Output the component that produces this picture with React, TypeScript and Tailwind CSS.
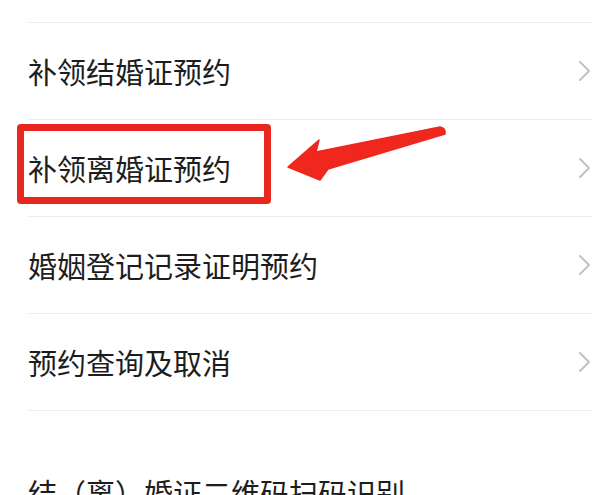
const items = ["补领结婚证预约", "补领离婚证预约", "婚姻登记记录证明预约", "预约查询及取消"];

function Divider() {
  return <div className="ml-[28px] mr-[8px] h-px bg-[#ececec]" />;
}

function Chevron() {
  return (
    <svg width="13" height="22" viewBox="0 0 13 22" fill="none" className="shrink-0">
      <polyline points="2,2 11,11 2,20" stroke="#c2c2c2" strokeWidth="2" strokeLinecap="round" strokeLinejoin="round" />
    </svg>
  );
}

function Row({ label, highlighted }: { label: string; highlighted?: boolean }) {
  return (
    <div className="relative flex h-[96px] items-center justify-between pl-[28px] pr-[9px]">
      <span className="text-[29px] leading-none">{label}</span>
      <Chevron />
      {highlighted && (
        <>
          <div className="absolute left-[17px] top-[4px] h-[80px] w-[254px] rounded-[4px] border-[7px] border-[#e8281f]" />
          <svg className="absolute left-0 top-0" width="600" height="96" viewBox="0 0 600 96">
            <path
              d="M288 47 L319 20 L316 32 L440 7 Q446 8 445 14 L328 49 L320 60 Z"
              fill="#ef271d"
              stroke="#ef271d"
              strokeWidth="1.5"
              strokeLinejoin="round"
            />
          </svg>
        </>
      )}
    </div>
  );
}

export default function App() {
  return (
    <div className="h-[495px] w-[600px] overflow-hidden bg-white font-['Noto_Sans_CJK_SC',sans-serif] text-[#1d1d1d]">
      <div className="h-[22px]" />
      <Divider />
      {items.map((label, i) => (
        <div key={label}>
          <Row label={label} highlighted={i === 1} />
          <Divider />
        </div>
      ))}
      <div className="pl-[28px] pt-[67px] text-[29px] leading-[29px]">结（离）婚证二维码扫码识别</div>
    </div>
  );
}
